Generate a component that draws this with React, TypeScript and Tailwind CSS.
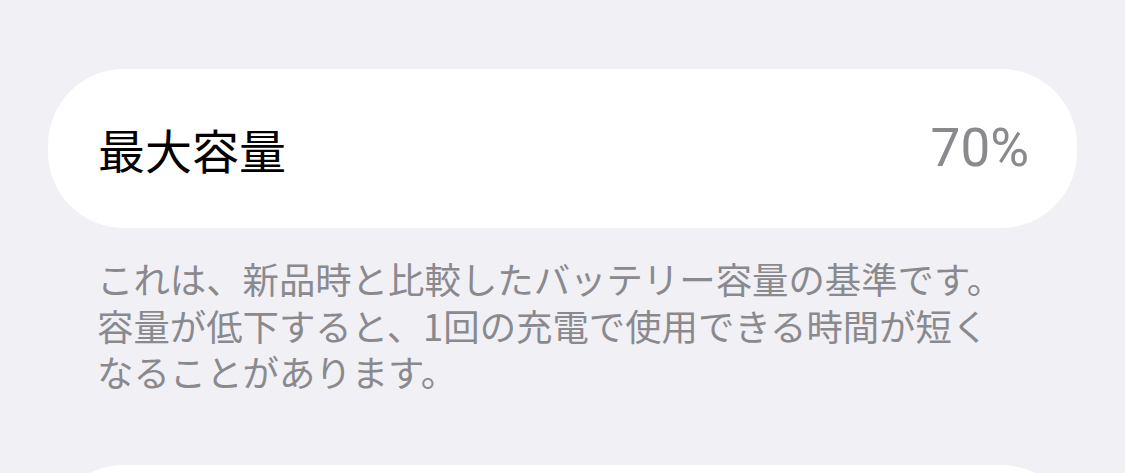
import React from "react"

const jp = { fontFamily: '"Noto Sans CJK JP", "Noto Sans", sans-serif' }

function CapacityRow({ label, value }: { label: string; value: string }) {
  return (
    <div className="flex h-[159px] items-center justify-between rounded-[76px] bg-white pl-[50px] pr-[48px]">
      <span className="text-[47px] leading-none text-black">{label}</span>
      <span
        className="text-[53px] leading-none text-[#8a8a8e]"
        style={{ fontFamily: 'Roboto, "Noto Sans", sans-serif' }}
      >
        {value}
      </span>
    </div>
  )
}

export default function App() {
  return (
    <div className="h-[473px] w-[1125px] overflow-hidden bg-[#f1f0f5] px-[48px] pt-[69px]" style={jp}>
      <CapacityRow label="最大容量" value="70%" />

      <p className="mt-[27px] pl-[49px] text-[36.4px] leading-[46.5px] text-[#8a8a8e]">
        これは、新品時と比較したバッテリー容量の基準です。
        <br />
        容量が低下すると、1回の充電で使用できる時間が短く
        <br />
        なることがあります。
      </p>

      {/* next grouped row, cut off by the bottom edge */}
      <div className="mt-[70px] h-[159px] rounded-[76px] bg-white" />
    </div>
  )
}
